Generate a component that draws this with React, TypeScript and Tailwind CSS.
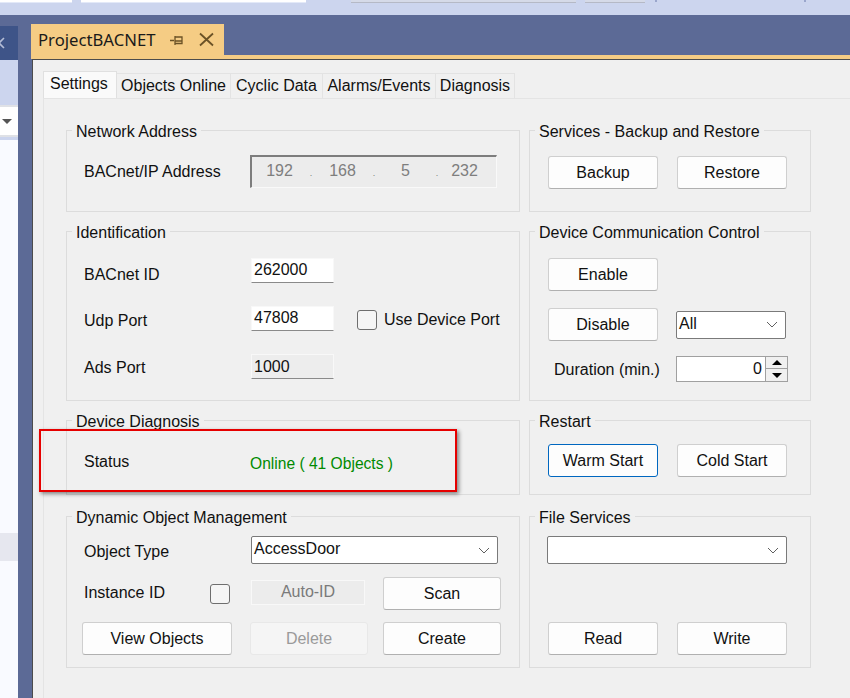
import {FC, ReactNode} from "react";

const Btn: FC<{label: string; className?: string; disabled?: boolean; focused?: boolean}> = ({
	label,
	className = "",
	disabled,
	focused,
}) => {
	let tone = "bg-[#fdfdfd] border-[#cfcfcf] border-b-[#b0b0b0] text-[#111]";
	if (disabled) tone = "bg-[#f5f5f5] border-[#e8e8e8] text-[#9a9a9a]";
	if (focused) tone = "bg-[#fdfdfd] border-[#0067c0] text-[#111]";
	return (
		<div
			className={`flex items-center justify-center h-[33px] rounded-[3px] border ${tone} ${className}`}
		>
			{label}
		</div>
	);
};

const Group: FC<{title: string; className?: string; children: ReactNode}> = ({
	title,
	className = "",
	children,
}) => (
	<div className={`relative border border-[#dcdcdc] ${className}`}>
		<span className="absolute left-[5px] -top-[9px] bg-[#f0f0f0] px-[4px] leading-[19px] text-[#111] whitespace-nowrap">
			{title}
		</span>
		{children}
	</div>
);

const Chevron = () => (
	<svg width="12" height="7" viewBox="0 0 12 7" className="shrink-0">
		<path d="M1 1l5 5 5-5" fill="none" stroke="#606060" strokeWidth="1" />
	</svg>
);

const Combo: FC<{value?: string; className?: string}> = ({value = "", className = ""}) => (
	<div
		className={`flex items-center justify-between h-[28px] pl-[2px] pr-[7px] bg-white border border-[#7a7a7a] rounded-[2px] text-[#111] ${className}`}
	>
		<span className="-mt-[2px]">{value}</span>
		<Chevron />
	</div>
);

const Field: FC<{value: string; readOnly?: boolean}> = ({value, readOnly}) => (
	<div
		className={`flex items-center w-[83px] h-[25px] pl-[2px] border-b border-b-[#8a8a8a] border-t border-x border-t-[#f8f8f8] border-x-[#f8f8f8] text-[#111] ${
			readOnly ? "bg-[#ededed]" : "bg-white"
		}`}
	>
		<span className={readOnly ? "" : "-mt-[1px]"}>{value}</span>
	</div>
);

const Check = () => (
	<div className="w-[20px] h-[20px] shrink-0 rounded-[3px] border border-[#6e6e6e] bg-[#f5f5f5]" />
);

const tabs = [
	{label: "Objects Online", width: "w-[114px]"},
	{label: "Cyclic Data", width: "w-[92px]"},
	{label: "Alarms/Events", width: "w-[113px]"},
	{label: "Diagnosis", width: "w-[79px]"},
];

export default function App() {
	return (
		<div className="relative w-[850px] h-[698px] overflow-hidden bg-[#5c6a96] text-[16px] text-[#111] font-['Liberation_Sans',Arial,sans-serif]">
			<div className="flex flex-col h-full">
				{/* toolbar strip */}
				<div className="relative h-[15px] bg-[#ccd5ee] shrink-0">
					<div className="absolute left-0 top-0 w-[72px] h-[3px] bg-white border-b border-[#e3e9f8]" />
					<div className="absolute left-[81px] top-0 w-[225px] h-[3px] bg-white border-b border-[#e3e9f8]" />
					<div className="absolute left-[351px] top-0 w-[225px] h-[3px] bg-[#d5dae8] border-b border-[#b5b9c6]" />
					<div className="absolute left-[585px] top-0 w-[60px] h-[3px] bg-[#d5dae8] border-b border-[#b5b9c6]" />
					<div className="absolute left-[655px] top-0 w-[2px] h-[2px] bg-[#9aa6cc]" />
					<div className="absolute left-[804px] top-0 w-[2px] h-[2px] bg-[#9aa6cc]" />
				</div>

				<div className="flex flex-1 min-h-0">
					{/* left docked panel */}
					<div className="w-[18px] shrink-0 flex flex-col pt-[11px]">
						<div className="flex items-center h-[34px] bg-[#3e5488]">
							<svg width="10" height="12" viewBox="0 0 10 12" className="-ml-[3px]">
								<path d="M7 1L2 6l5 5" stroke="#b4bdd6" strokeWidth="1.6" fill="none" />
							</svg>
						</div>
						<div className="h-[80px] bg-[#ccd5ee] pt-[45px]">
							<div className="h-[32px] bg-white border-y-2 border-[#dfe1e6] flex items-center justify-end pr-[6px]">
								<div className="border-x-[5px] border-x-transparent border-t-[5px] border-t-[#555]" />
							</div>
						</div>
						<div className="flex-1 bg-[#f9faff] flex flex-col">
							<div className="h-[393px]" />
							<div className="h-[28px] bg-[#e6e7ef]" />
						</div>
					</div>

					{/* document well */}
					<div className="flex-1 flex flex-col pl-[13px] pt-[9px] min-w-0">
						<div className="flex items-center w-[193px] h-[31px] pl-[7px] bg-[#f5cc84] text-[#1a1a1a] shrink-0">
							<span className="font-['Noto_Sans',sans-serif] text-[16.7px]">ProjectBACNET</span>
							<svg width="14" height="14" viewBox="0 0 14 14" className="ml-[15px]">
								<path d="M0 7.5h4M5 3v9M5 4h7v6.5H5M5 8h7" stroke="#6b5226" strokeWidth="1.3" fill="none" />
							</svg>
							<svg width="15" height="15" viewBox="0 0 15 15" className="ml-[15px]">
								<path d="M1 1.5l13 12M14 1.5L1 13.5" stroke="#6b5226" strokeWidth="1.8" fill="none" />
							</svg>
						</div>
						<div className="h-[4px] bg-[#f5cc84] shrink-0" />

						{/* tool window */}
						<div className="flex-1 flex flex-col ml-[1px] border-t border-l border-[#4c4c4c] bg-[#f0f0f0] pl-[10px] pt-[11px] min-h-0">
							<div className="flex h-[27px] items-end shrink-0">
								<div className="pl-[6px] w-[74px] h-[27px] leading-[24px] bg-[#fafafa] border border-b-0 border-[#e0e0e0]">
									Settings
								</div>
								{tabs.map(tab => (
									<div
										key={tab.label}
										className={`flex items-center justify-center h-[25px] ${tab.width} border-t border-r border-[#e3e3e3]`}
									>
										{tab.label}
									</div>
								))}
							</div>
							<div className="flex-1 border-t border-l border-[#e4e4e4]">
								<div className="grid grid-cols-[454px_282px] gap-x-[9px] pl-[22px] pt-[31px]">
									<div className="flex flex-col">
										<Group title="Network Address" className="h-[82px] pl-[17px] pt-[24px]">
											<div className="flex items-center">
												<span className="w-[166px]">BACnet/IP Address</span>
												<div className="flex items-center w-[247px] h-[33px] border border-[#f9f9f9] border-t-[#7d7d7d] border-l-[#7d7d7d] border-t-2 border-l-2 bg-[#ececec] text-[#7e7e7e]">
													<span className="w-[55px] text-center -mt-[2px]">192</span>
													<span className="w-[8px] text-center mt-[4px] text-[9px]">.</span>
													<span className="w-[55px] text-center -mt-[2px]">168</span>
													<span className="w-[8px] text-center mt-[4px] text-[9px]">.</span>
													<span className="w-[55px] text-center -mt-[2px]">5</span>
													<span className="w-[8px] text-center mt-[4px] text-[9px]">.</span>
													<span className="w-[47px] text-center -mt-[2px]">232</span>
												</div>
											</div>
										</Group>

										<Group title="Identification" className="h-[170px] mt-[19px] pl-[17px] pt-[26px]">
											<div className="flex flex-col gap-[23px]">
												<div className="flex items-center h-[25px]">
													<span className="w-[167px] mt-[8px]">BACnet ID</span>
													<Field value="262000" />
												</div>
												<div className="flex items-center h-[25px]">
													<span className="w-[167px] mt-[4px]">Udp Port</span>
													<Field value="47808" />
													<div className="ml-[23px] mt-[2px]">
														<Check />
													</div>
													<span className="ml-[7px] mt-[2px]">Use Device Port</span>
												</div>
												<div className="flex items-center h-[25px]">
													<span className="w-[167px] mt-[2px]">Ads Port</span>
													<Field value="1000" readOnly />
												</div>
											</div>
										</Group>

										<Group title="Device Diagnosis" className="h-[75px] mt-[19px] pl-[17px] pt-[31px]">
											<div className="flex items-center">
												<span className="w-[166px] -mt-[4px]">Status</span>
												<span className="text-[#008a00] text-[15.6px]">Online ( 41 Objects )</span>
											</div>
										</Group>

										<Group title="Dynamic Object Management" className="h-[152px] mt-[21px] pl-[15px] pt-[19px]">
											<div className="flex items-center h-[28px]">
												<span className="w-[169px] pl-[2px] mt-[3px]">Object Type</span>
												<Combo value="AccessDoor" className="w-[247px]" />
											</div>
											<div className="flex items-center mt-[13px] h-[33px]">
												<span className="w-[128px] pl-[2px] -mt-[2px]">Instance ID</span>
												<Check />
												<div className="flex items-center justify-center w-[114px] h-[25px] ml-[21px] -mt-[3px] bg-[#ececec] border border-[#f8f8f8] text-[#7a7a7a]">
													Auto-ID
												</div>
												<Btn label="Scan" className="w-[118px] ml-[18px]" />
											</div>
											<div className="flex items-center mt-[12px]">
												<Btn label="View Objects" className="w-[150px]" />
												<Btn label="Delete" disabled className="w-[118px] ml-[18px]" />
												<Btn label="Create" className="w-[118px] ml-[15px]" />
											</div>
										</Group>
									</div>

									<div className="flex flex-col">
										<Group title="Services - Backup and Restore" className="h-[82px] pl-[18px] pt-[25px]">
											<div className="flex gap-[19px]">
												<Btn label="Backup" className="w-[110px]" />
												<Btn label="Restore" className="w-[110px]" />
											</div>
										</Group>

										<Group title="Device Communication Control" className="h-[170px] mt-[19px] pl-[18px] pt-[26px]">
											<Btn label="Enable" className="w-[110px]" />
											<div className="flex items-center mt-[17px]">
												<Btn label="Disable" className="w-[110px]" />
												<Combo value="All" className="w-[110px] ml-[18px]" />
											</div>
											<div className="flex items-center mt-[15px]">
												<span className="w-[128px] pl-[6px] whitespace-nowrap mt-[2px]">Duration (min.)</span>
												<div className="flex items-center w-[112px] h-[26px] bg-white border border-[#a0a0a0]">
													<span className="flex-1 text-right pr-[3px]">0</span>
													<div className="flex flex-col gap-[1px] w-[22px] h-full bg-[#f0f0f0] border-l border-[#a0a0a0]">
														<div className="flex-1 flex items-center justify-center border-b border-[#a0a0a0]">
															<div className="border-x-[5px] border-x-transparent border-b-[5px] border-b-black" />
														</div>
														<div className="flex-1 flex items-center justify-center">
															<div className="border-x-[5px] border-x-transparent border-t-[5px] border-t-black" />
														</div>
													</div>
												</div>
											</div>
										</Group>

										<Group title="Restart" className="h-[75px] mt-[19px] pl-[18px] pt-[23px]">
											<div className="flex gap-[19px]">
												<Btn label="Warm Start" focused className="w-[110px]" />
												<Btn label="Cold Start" className="w-[110px]" />
											</div>
										</Group>

										<Group title="File Services" className="h-[152px] mt-[21px] pl-[17px] pt-[19px]">
											<Combo className="w-[240px]" />
											<div className="flex gap-[19px] mt-[58px] pl-[1px]">
												<Btn label="Read" className="w-[110px]" />
												<Btn label="Write" className="w-[110px]" />
											</div>
										</Group>
									</div>
								</div>
							</div>
						</div>
					</div>
				</div>
			</div>

			{/* annotation box drawn over the screenshot */}
			<div className="absolute left-[39px] top-[429px] w-[418px] h-[63px] border-2 border-[#e60000] shadow-[2px_2px_4px_rgba(0,0,0,0.45)]" />
		</div>
	);
}
